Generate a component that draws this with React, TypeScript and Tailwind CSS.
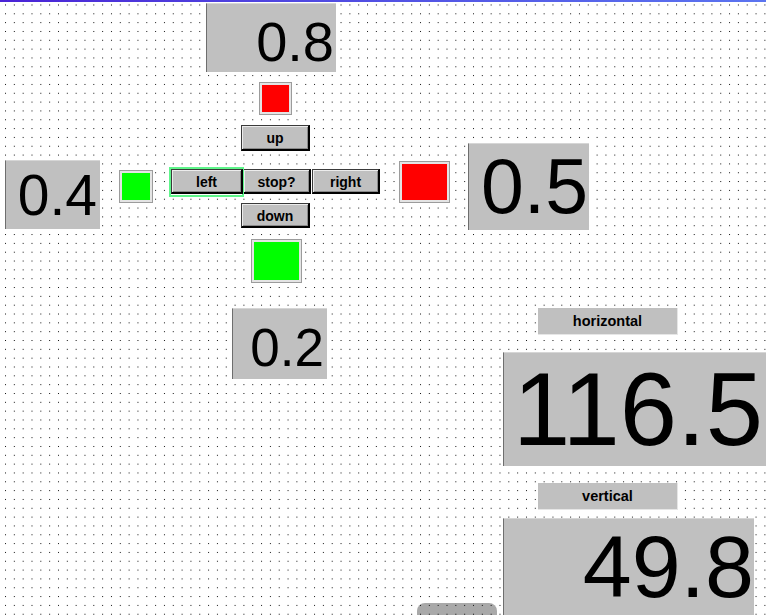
import React from "react";

const sans = "font-['Liberation_Sans',Arial,sans-serif]";

function Display({ className, textClass, value }: { className: string; textClass: string; value: string }) {
  return (
    <div
      className={`bg-[#c0c0c0] border-l border-t border-l-[#6e6e6e] border-t-[#d6d6d6] flex justify-end items-start overflow-hidden text-black ${className}`}
    >
      <div className="absolute left-0 top-[-1px] h-px w-[42px] bg-[#8a8a8a]" />
      <span className={`leading-none whitespace-nowrap ${textClass}`}>{value}</span>
    </div>
  );
}

function Btn({ className, label }: { className: string; label: string }) {
  return (
    <div
      className={`h-[25px] bg-[#c0c0c0] border border-[#3a3a3a] border-r-2 border-b-2 border-r-black border-b-black shadow-[inset_1px_1px_0_#ececec,inset_-1px_-1px_0_#8a8a8a] flex items-center justify-center text-[14px] font-bold text-black ${className}`}
    >
      <span className="leading-none pt-px">{label}</span>
    </div>
  );
}

function Lamp({ className, color }: { className: string; color: string }) {
  return (
    <div className={`absolute border border-[#9c9c9c] bg-[#e4e4e4] p-[2px] flex ${className}`}>
      <div className={`flex-1 ${color}`} />
    </div>
  );
}

function Label({ text }: { text: string }) {
  return (
    <div className="ml-[35px] w-[140px] h-[27px] bg-[#c0c0c0] border-r border-b border-r-[#e6e6e6] border-b-[#e6e6e6] flex items-center justify-center text-[14.5px] font-bold text-black">
      <span className="leading-none">{text}</span>
    </div>
  );
}

export default function App() {
  return (
    <div className={`relative w-[766px] h-[615px] overflow-hidden bg-white ${sans}`}>
      <div className="absolute left-0 top-0 w-full h-[2px] bg-gradient-to-r from-[#4a22d6] to-[#5b74f0]" />

      {/* bottom rounded tab */}
      <div className="absolute left-[417px] top-[603px] w-[80px] h-[20px] rounded-t-[8px] bg-[#a9a9a9]" />

      {/* dot grid of the design canvas */}
      <svg className="absolute left-0 top-[2px] pointer-events-none" width="766" height="613">
        <defs>
          <pattern id="dots" x="5" y="11.3" width="8.83" height="8.83" patternUnits="userSpaceOnUse">
            <rect x="0" y="0" width="1" height="1" fill="#111" />
          </pattern>
        </defs>
        <rect x="0" y="0" width="766" height="613" fill="url(#dots)" />
      </svg>

      {/* widgets placed on the free canvas */}
      <Display className="absolute left-[206px] top-[3px] w-[130px] h-[69px]" textClass="text-[56px] pt-[10px] pr-[2px]" value="0.8" />
      <Display className="absolute left-[5px] top-[160px] w-[95px] h-[69px]" textClass="text-[57px] pt-[6px] pr-[3px]" value="0.4" />
      <Display className="absolute left-[468px] top-[143px] w-[121px] h-[87px]" textClass="text-[77px] pt-[4px] pr-px" value="0.5" />
      <Display className="absolute left-[232px] top-[308px] w-[95px] h-[71px]" textClass="text-[53px] pt-[12px] pr-[3px]" value="0.2" />

      <Lamp className="left-[259px] top-[82px] w-[33px] h-[33px]" color="bg-[#ff0000]" />
      <Lamp className="left-[119px] top-[170px] w-[34px] h-[33px]" color="bg-[#00ff00]" />
      <Lamp className="left-[399px] top-[161px] w-[51px] h-[42px]" color="bg-[#ff0000]" />
      <Lamp className="left-[251px] top-[239px] w-[51px] h-[44px]" color="bg-[#00ff00]" />

      {/* direction pad */}
      <div className="absolute left-[171px] top-[125px] flex flex-col items-start">
        <Btn className="ml-[70px] w-[69px] h-[26px]" label="up" />
        <div className="mt-[18px] flex items-start">
          <div className="relative">
            <div className="absolute left-[-2px] top-[-2px] w-[75px] h-[30px] border-2 border-[#5ef58a]" />
            <Btn className="relative w-[72px]" label="left" />
          </div>
          <Btn className="w-[68px]" label="stop?" />
          <Btn className="ml-px w-[68px]" label="right" />
        </div>
        <Btn className="ml-[70px] mt-[9px] w-[69px]" label="down" />
      </div>

      {/* readouts */}
      <div className="absolute left-[503px] top-[308px] flex flex-col">
        <Label text="horizontal" />
        <Display className="relative mt-[17px] w-[263px] h-[114px]" textClass="text-[103px] pt-[5px] pr-[3px]" value="116.5" />
        <div className="mt-[17px]">
          <Label text="vertical" />
        </div>
        <Display className="relative mt-[8px] w-[251px] h-[97px]" textClass="text-[88px] pt-[4px]" value="49.8" />
      </div>
    </div>
  );
}
